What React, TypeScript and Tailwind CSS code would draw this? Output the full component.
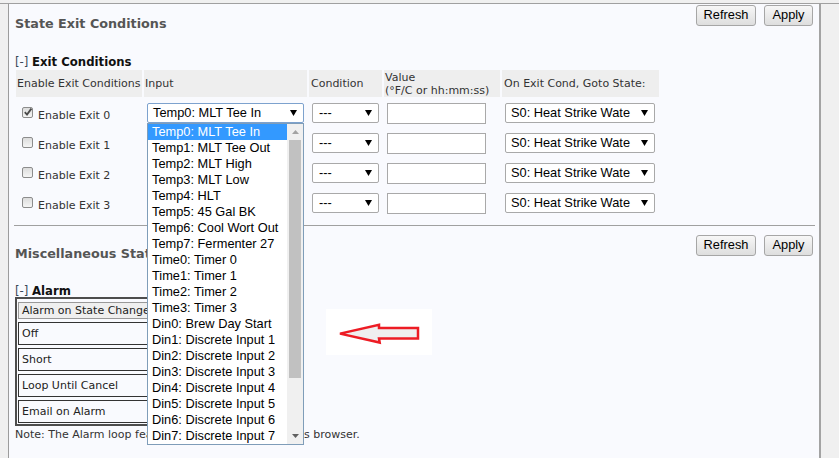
import React from "react";

const V = "font-['DejaVu_Sans',Verdana,sans-serif]";
const A = "font-['Liberation_Sans',Arial,sans-serif]";

function Caret() {
  return (
    <svg width="7" height="6" viewBox="0 0 7 6" className="shrink-0">
      <path d="M0 0H7L3.5 6Z" fill="#000" />
    </svg>
  );
}

function Select({ text, className }: { text: string; className: string }) {
  return (
    <div
      className={`flex items-center justify-between h-[20px] bg-white border rounded-[2px] pl-[5px] pr-[6px] text-[12.8px] leading-none text-black whitespace-nowrap overflow-hidden ${A} ${className}`}
    >
      <span>{text}</span>
      <Caret />
    </div>
  );
}

function Check({ checked }: { checked?: boolean }) {
  return (
    <span className="relative block shrink-0 w-[11px] h-[11px] mt-[-2px] rounded-[2px] border border-[#8c8c8c] bg-linear-to-b from-[#dcdcdc] to-[#f5f5f5]">
      {checked && (
        <svg className="absolute left-[0px] top-[-1px]" width="10" height="10" viewBox="0 0 10 10">
          <path d="M1.8 5.2L4 7.6L8.4 1.6" stroke="#4a4a4a" strokeWidth="1.8" fill="none" />
        </svg>
      )}
    </span>
  );
}

function Buttons() {
  const b =
    `h-[21px] border border-[#a6a6a6] rounded-[3px] bg-linear-to-b from-[#f7f7f7] to-[#dedede] text-[12.8px] leading-none text-black flex items-center justify-center ${A}`;
  return (
    <div className="flex gap-[8px]">
      <div className={`${b} w-[60px]`}>Refresh</div>
      <div className={`${b} w-[49px]`}>Apply</div>
    </div>
  );
}

const items = [
  "Temp0: MLT Tee In",
  "Temp1: MLT Tee Out",
  "Temp2: MLT High",
  "Temp3: MLT Low",
  "Temp4: HLT",
  "Temp5: 45 Gal BK",
  "Temp6: Cool Wort Out",
  "Temp7: Fermenter 27",
  "Time0: Timer 0",
  "Time1: Timer 1",
  "Time2: Timer 2",
  "Time3: Timer 3",
  "Din0: Brew Day Start",
  "Din1: Discrete Input 1",
  "Din2: Discrete Input 2",
  "Din3: Discrete Input 3",
  "Din4: Discrete Input 4",
  "Din5: Discrete Input 5",
  "Din6: Discrete Input 6",
  "Din7: Discrete Input 7",
];

export default function App() {
  const hc = "bg-[#eeeeee] flex items-center px-[1px] whitespace-nowrap";
  return (
    <div className={`relative w-[839px] h-[458px] overflow-hidden bg-[#f0f0f0] pt-[3px] ${V}`}>
      <div className="h-full border-t border-[#a0a0a0] pl-[8px]">
        <div className="w-[813px] h-full border-l border-[#9c9c9c] border-r-2 border-r-[#a3a3a3] bg-[#f9fafe] flex flex-col">
          {/* Section 1 */}
          <div className="flex justify-between items-start px-[6px] pt-[1px]">
            <h2 className="mt-[11px] text-[12.75px] leading-[16px] font-bold text-[#555]">State Exit Conditions</h2>
            <Buttons />
          </div>
          <div className="mt-[23px] ml-[6px] text-[11.7px] leading-[14px] whitespace-nowrap">
            <span className="text-[#3b4a5a]">[-]</span> <span className="font-bold text-[#111]">Exit Conditions</span>
          </div>
          <div className="mt-[1px] ml-[7px] grid grid-cols-[126px_163px_73px_116px_157px] grid-rows-[27px_28px_28px_28px_28px] gap-[2px] text-[11px] leading-[13px] text-[#333]">
            <div className={hc}>Enable Exit Conditions</div>
            <div className={hc}>Input</div>
            <div className={`${hc} pl-[2px]`}>Condition</div>
            <div className={hc}>
              <div>
                Value
                <br />
                (°F/C or hh:mm:ss)
              </div>
            </div>
            <div className={`${hc} pl-[2px]`}>On Exit Cond, Goto State:</div>
            {[0, 1, 2, 3].map((i) => (
              <React.Fragment key={i}>
                <div className="flex items-center pl-[6px] gap-[5px]">
                  <Check checked={i === 0} />
                  <span className="mt-[4px] whitespace-nowrap">Enable Exit {i}</span>
                </div>
                <div className="flex items-center pl-[3px]">
                  <Select
                    text="Temp0: MLT Tee In"
                    className={i === 0 ? "w-[157px] border-[#7da2ce]" : "w-[157px] border-[#a9a9a9]"}
                  />
                </div>
                <div className="flex items-center pl-[3px]">
                  <Select text="---" className="w-[67px] border-[#a9a9a9] pl-[6px]" />
                </div>
                <div className="flex items-center pl-[3px]">
                  <div className="w-[99px] h-[21px] bg-white border border-[#a9a9a9]" />
                </div>
                <div className="flex items-center pl-[3px]">
                  <Select text="S0: Heat Strike Wate" className="w-[150px] border-[#a9a9a9]" />
                </div>
              </React.Fragment>
            ))}
          </div>
          <div className="mt-[8px] ml-[5px] mr-[4px] h-px bg-[#a0a0a0]" />

          {/* Section 2 */}
          <div className="mt-[9px] flex justify-between items-start px-[6px]">
            <h2 className="mt-[11px] text-[12.75px] leading-[16px] font-bold text-[#555] whitespace-nowrap">
              Miscellaneous State Settings
            </h2>
            <Buttons />
          </div>
          <div className="mt-[22px] ml-[6px] text-[11.7px] leading-[14px] whitespace-nowrap">
            <span className="text-[#3b4a5a]">[-]</span> <span className="font-bold text-[#111]">Alarm</span>
          </div>
          <div className="mt-[-1px] ml-[6px] w-[272px] border-2 border-[#4d4d4d] px-[1px] pt-[3px] pb-[1px] flex flex-col gap-[3px] text-[11px] leading-[13px] text-[#222]">
            <div className="h-[17px] border border-[#999] bg-[#efefef] flex items-center pl-[3px] whitespace-nowrap">
              Alarm on State Change
            </div>
            {["Off", "Short", "Loop Until Cancel", "Email on Alarm"].map((t) => (
              <div key={t} className="h-[23px] border border-[#333] flex items-center pl-[3px] whitespace-nowrap">
                {t}
              </div>
            ))}
          </div>
          <div className="mt-[2px] ml-[6px] text-[11px] leading-[13px] text-[#333] whitespace-nowrap">
            Note: The Alarm loop fe<span className="tracking-[0.2px]">ature may not work with thi</span>s browser.
          </div>
        </div>
      </div>

      {/* Arrow picture */}
      <div className="absolute left-[326px] top-[309px] w-[106px] h-[46px] bg-white">
        <svg width="106" height="46" viewBox="0 0 106 46">
          <polygon
            points="14,24.6 53,15.7 53,19 92,19 92,29.4 53,29.4 53.7,33.5"
            fill="#efefef"
            stroke="#ed1c24"
            strokeWidth="2.5"
          />
        </svg>
      </div>

      {/* Open dropdown list */}
      <div className={`absolute left-[147px] top-[123px] w-[157px] h-[322px] border border-[#7f9db9] bg-white flex ${A}`}>
        <div className="w-[139px] flex flex-col">
          {items.map((t, i) => (
            <div
              key={t}
              className={`h-[16px] shrink-0 pl-[4px] flex items-center text-[12.8px] leading-none whitespace-nowrap ${
                i === 0 ? "bg-[#3399ff] text-white" : "text-black"
              }`}
            >
              {t}
            </div>
          ))}
        </div>
        <div className="w-[16px] bg-[#f0f0f0] flex flex-col">
          <div className="h-[16px] flex items-center justify-center">
            <svg width="7" height="4" viewBox="0 0 7 4">
              <polygon points="0,4 3.5,0 7,4" fill="#a3a3a3" />
            </svg>
          </div>
          <div className="h-[238px] mx-[2px] bg-[#c1c1c1]" />
          <div className="flex-1" />
          <div className="h-[16px] flex items-center justify-center">
            <svg width="7" height="4" viewBox="0 0 7 4">
              <polygon points="0,0 7,0 3.5,4" fill="#606060" />
            </svg>
          </div>
        </div>
      </div>
    </div>
  );
}
